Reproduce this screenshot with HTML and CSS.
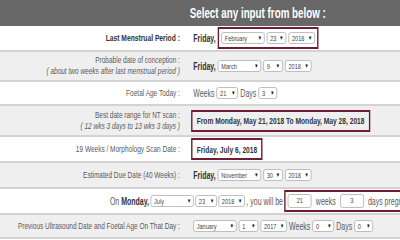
FILE: index.html
```html
<!DOCTYPE html>
<html lang="en">
<head>
    <meta charset="UTF-8">
    <meta name="viewport" content="width=device-width, initial-scale=1.0">
    <title>Pregnancy Calculator</title>
    <link rel="stylesheet" href="styles.css">
</head>
<body>

    <div class="page">
        <div class="head">Select any input from below :</div>

        <div class="row r1">
            <div class="lbl"><b>Last Menstrual Period :</b></div>
            <div class="val">
                <b>Friday,</b>
                <span class="mark">
                    <span class="sel m">February</span>
                    <span class="sel d">23</span>
                    <span class="sel y">2018</span>
                </span>
            </div>
        </div>

        <div class="row grey r2">
            <div class="lbl">
                Probable date of conception :
                <em>( about two weeks after last menstrual period )</em>
            </div>
            <div class="val">
                <b>Friday,</b>
                <span class="sel m">March</span>
                <span class="sel d">9</span>
                <span class="sel y">2018</span>
            </div>
        </div>

        <div class="row r3">
            <div class="lbl">Foetal Age Today :</div>
            <div class="val">
                <span>Weeks</span>
                <span class="sel w">21</span>
                <span>Days</span>
                <span class="sel s">3</span>
            </div>
        </div>

        <div class="row grey r4">
            <div class="lbl">
                Best date range for NT scan :
                <em>( 12 wks 3 days to 13 wks 3 days )</em>
            </div>
            <div class="val boxed">
                <span class="mark text">From Monday, May 21, 2018 To Monday, May 28, 2018</span>
            </div>
        </div>

        <div class="row r5">
            <div class="lbl">19 Weeks / Morphology Scan Date :</div>
            <div class="val boxed">
                <span class="mark text short">Friday, July 6, 2018</span>
            </div>
        </div>

        <div class="row grey r6">
            <div class="lbl">Estimated Due Date (40 Weeks) :</div>
            <div class="val">
                <b>Friday,</b>
                <span class="sel m">November</span>
                <span class="sel d">30</span>
                <span class="sel y">2018</span>
            </div>
        </div>

        <div class="row single r7">
            <div class="val">
                <span>On <b>Monday,</b></span>
                <span class="sel m">July</span>
                <span class="sel w">23</span>
                <span class="sel y">2018</span>
                <span>, you will be</span>
                <span class="mark">
                    <span class="num">21</span>
                    <span class="word">weeks</span>
                    <span class="num">3</span>
                    <span class="word">days pregnant</span>
                </span>
            </div>
        </div>

        <div class="row grey r8">
            <div class="lbl">Previous Ultrasound Date and Foetal Age On That Day :</div>
            <div class="val">
                <span class="sel m">January</span>
                <span class="sel d">1</span>
                <span class="sel y">2017</span>
                <span>Weeks</span>
                <span class="sel w">0</span>
                <span>Days</span>
                <span class="sel s">0</span>
            </div>
        </div>
    </div>

</body>
</html>
```

FILE: styles.css
```css
* {
    margin: 0;
    padding: 0;
    box-sizing: border-box;
}

body {
    width: 400px;
    height: 240px;
    overflow: hidden;
    background: #fff;
    font-family: "Liberation Sans", Arial, sans-serif;
    color: #5a5a5a;
}

/* the whole form is drawn narrow, like the original capture */
.page {
    width: 580px;
    transform: scaleX(0.7);
    transform-origin: 0 0;
}

.head {
    height: 26px;
    background: #686868;
    color: #fff;
    font-weight: bold;
    font-size: 14px;
    line-height: 26px;
    padding-left: 271px;
}

.row {
    display: grid;
    grid-template-columns: 265px 1fr;
    align-items: center;
    border-bottom: 2px solid #d3d3d3;
}
.row.grey {
    background: #efefef;
}
.row.single {
    grid-template-columns: 1fr;
    padding-left: 157px;
}
.row.single .val {
    padding-left: 0;
    gap: 2px;
}

.r1 { height: 26px; }
.r2 { height: 30px; }
.r3 { height: 24px; }
.r4 { height: 31px; }
.r5 { height: 26px; }
.r6 { height: 26px; }
.r7 { height: 26px; }
.r8 { height: 24px; }

.lbl {
    text-align: right;
    padding-right: 8px;
    font-size: 9.3px;
    line-height: 11px;
    white-space: nowrap;
}
.lbl b {
    color: #333;
    font-size: 9.6px;
}
.lbl em {
    display: block;
}

.val {
    display: flex;
    align-items: center;
    gap: 3px;
    padding-left: 11px;
    font-size: 10px;
    white-space: nowrap;
}
.val b {
    color: #333;
}
.val.boxed {
    padding-left: 8px;
}

.mark {
    display: inline-flex;
    align-items: center;
    gap: 3px;
    height: 22px;
    padding: 0 3px;
    border: 2px solid #6e1d33;
}
.mark.text {
    padding: 0 6px;
    font-weight: bold;
    font-size: 9.5px;
    color: #333;
}

.sel {
    display: inline-flex;
    align-items: center;
    justify-content: space-between;
    height: 12px;
    padding: 0 3px 0 4px;
    border: 1px solid #b3b3b3;
    border-radius: 3px;
    background: #fff;
    font-size: 8px;
    color: #444;
}
.sel::after {
    content: "\25BC";
    font-size: 6px;
    color: #111;
}
.sel.m { width: 62px; }
.sel.d { width: 28px; }
.sel.y { width: 38px; }
.sel.w { width: 31px; }
.sel.s { width: 27px; }

.num {
    display: inline-block;
    width: 34px;
    height: 14px;
    line-height: 12px;
    border: 1px solid #b3b3b3;
    border-radius: 3px;
    background: #fff;
    text-align: center;
    font-size: 8px;
    color: #444;
}
.word {
    margin: 0 3px;
}
```
